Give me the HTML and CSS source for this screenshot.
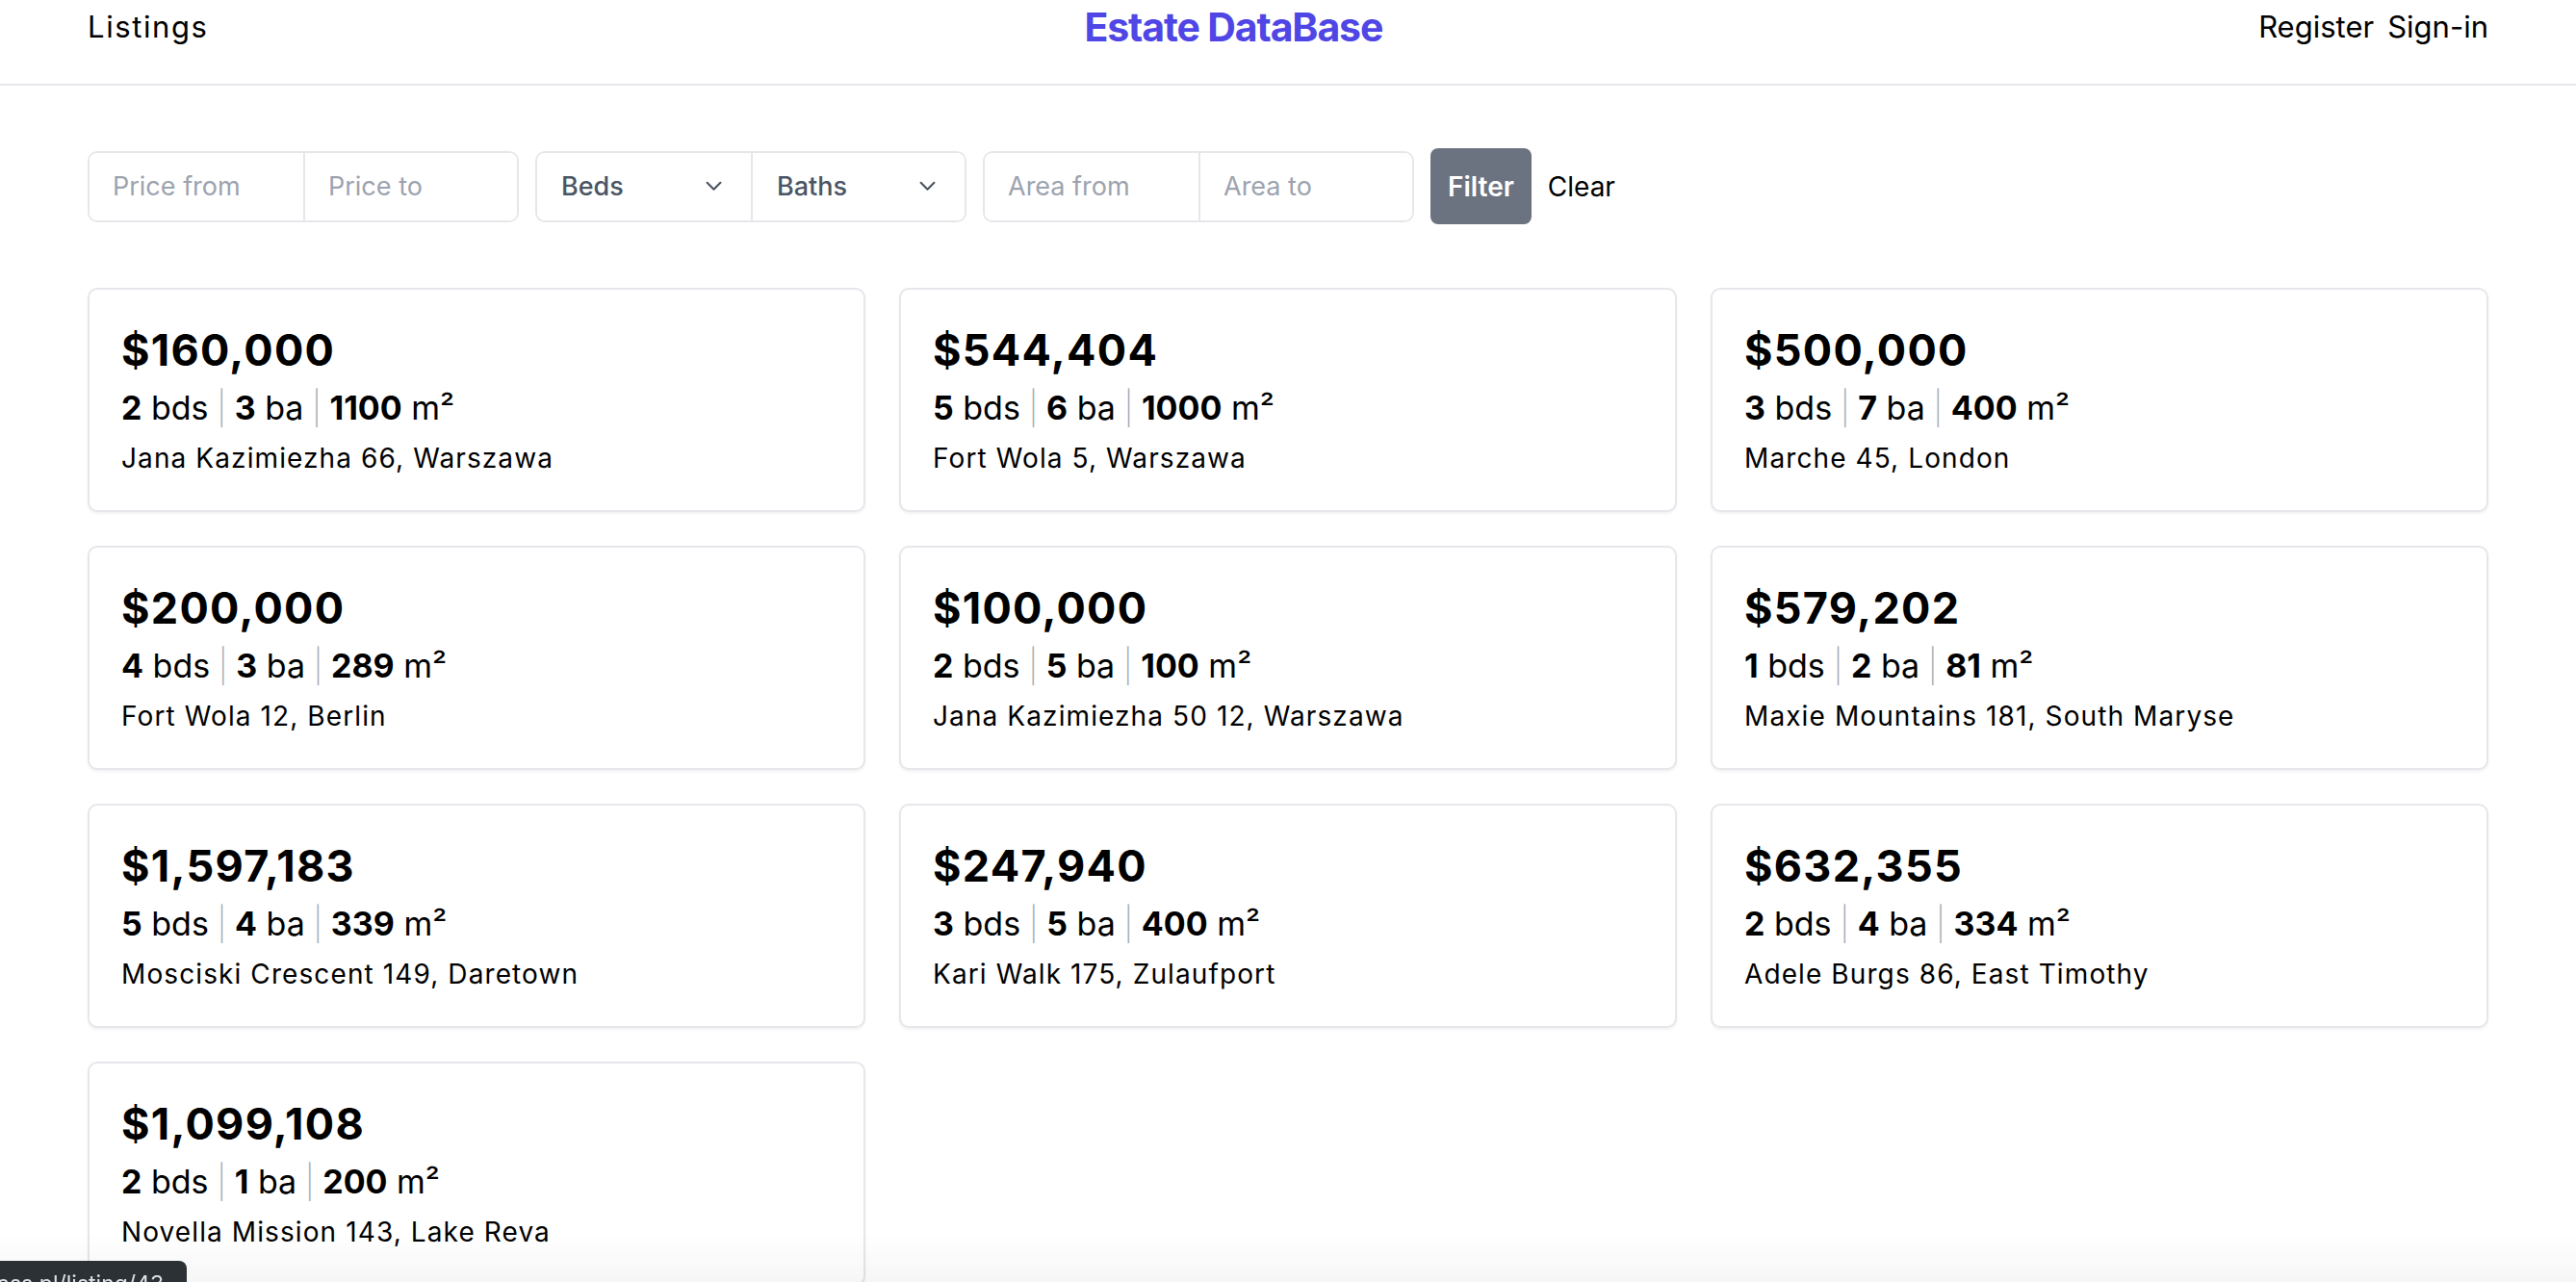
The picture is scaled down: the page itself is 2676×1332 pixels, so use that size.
FILE: index.html
```html
<!DOCTYPE html>
<html lang="en">
<head>
<meta charset="utf-8">
<title>Estate DataBase</title>
<link rel="stylesheet" href="styles.css">
</head>
<body>
<header class="topbar">
  <a class="nav-link nav-home" href="#">Listings</a>
  <a class="brand" href="#">Estate DataBase</a>
  <nav class="auth">
    <a class="nav-link" href="#">Register</a>
    <a class="nav-link" href="#">Sign-in</a>
  </nav>
</header>
<main class="content">
  <form class="filters">
    <div class="group">
      <input class="field" type="text" placeholder="Price from">
      <input class="field" type="text" placeholder="Price to">
    </div>
    <div class="group">
      <div class="field select">Beds<svg class="chev" viewBox="0 0 16 10"><path d="M1.5 1.5 L8 8 L14.5 1.5"/></svg></div>
      <div class="field select">Baths<svg class="chev" viewBox="0 0 16 10"><path d="M1.5 1.5 L8 8 L14.5 1.5"/></svg></div>
    </div>
    <div class="group">
      <input class="field" type="text" placeholder="Area from">
      <input class="field" type="text" placeholder="Area to">
    </div>
    <button class="btn-filter" type="button">Filter</button>
    <button class="btn-clear" type="button">Clear</button>
  </form>

  <section class="grid">
    <article class="card"><div class="price">$160,000</div><div class="specs"><b>2</b> bds <span class="sep">|</span> <b>3</b> ba <span class="sep">|</span> <b>1100</b> m²</div><div class="addr">Jana Kazimiezha 66, Warszawa</div></article>
    <article class="card"><div class="price">$544,404</div><div class="specs"><b>5</b> bds <span class="sep">|</span> <b>6</b> ba <span class="sep">|</span> <b>1000</b> m²</div><div class="addr">Fort Wola 5, Warszawa</div></article>
    <article class="card"><div class="price">$500,000</div><div class="specs"><b>3</b> bds <span class="sep">|</span> <b>7</b> ba <span class="sep">|</span> <b>400</b> m²</div><div class="addr">Marche 45, London</div></article>
    <article class="card"><div class="price">$200,000</div><div class="specs"><b>4</b> bds <span class="sep">|</span> <b>3</b> ba <span class="sep">|</span> <b>289</b> m²</div><div class="addr">Fort Wola 12, Berlin</div></article>
    <article class="card"><div class="price">$100,000</div><div class="specs"><b>2</b> bds <span class="sep">|</span> <b>5</b> ba <span class="sep">|</span> <b>100</b> m²</div><div class="addr">Jana Kazimiezha 50 12, Warszawa</div></article>
    <article class="card"><div class="price">$579,202</div><div class="specs"><b>1</b> bds <span class="sep">|</span> <b>2</b> ba <span class="sep">|</span> <b>81</b> m²</div><div class="addr">Maxie Mountains 181, South Maryse</div></article>
    <article class="card"><div class="price">$1,597,183</div><div class="specs"><b>5</b> bds <span class="sep">|</span> <b>4</b> ba <span class="sep">|</span> <b>339</b> m²</div><div class="addr">Mosciski Crescent 149, Daretown</div></article>
    <article class="card"><div class="price">$247,940</div><div class="specs"><b>3</b> bds <span class="sep">|</span> <b>5</b> ba <span class="sep">|</span> <b>400</b> m²</div><div class="addr">Kari Walk 175, Zulaufport</div></article>
    <article class="card"><div class="price">$632,355</div><div class="specs"><b>2</b> bds <span class="sep">|</span> <b>4</b> ba <span class="sep">|</span> <b>334</b> m²</div><div class="addr">Adele Burgs 86, East Timothy</div></article>
    <article class="card"><div class="price">$1,099,108</div><div class="specs"><b>2</b> bds <span class="sep">|</span> <b>1</b> ba <span class="sep">|</span> <b>200</b> m²</div><div class="addr">Novella Mission 143, Lake Reva</div></article>
  </section>
</main>
<div class="fade"></div>
<div class="status"><span class="status-text">ass.pl/listing/43</span></div>
</body>
</html>
```
FILE: styles.css
```css
* { box-sizing: border-box; }

html, body {
  margin: 0;
  padding: 0;
  background: #ffffff;
  color: #000000;
  font-family: Inter, "Noto Sans", "Liberation Sans", sans-serif;
}

a { color: inherit; text-decoration: none; }

.topbar {
  display: flex;
  justify-content: space-between;
  align-items: center;
  height: 89px;
  padding: 0 91px 31px;
  border-bottom: 2px solid #e5e7eb;
}

.nav-link {
  font-size: 31px;
  line-height: 38px;
}

.nav-home {
  letter-spacing: 1.6px;
}

.brand {
  font-size: 41px;
  line-height: 50px;
  font-weight: 700;
  color: #4f46e5;
  letter-spacing: -1.1px;
}

.auth {
  display: flex;
  gap: 14px;
}

.content {
  padding: 65px 91px 40px;
}

.filters {
  display: flex;
  align-items: center;
  gap: 17px;
  margin: 0 0 66px;
}

.group {
  display: flex;
  height: 74px;
  border: 2px solid #e5e7eb;
  border-radius: 10px;
  overflow: hidden;
}

.field {
  width: 222px;
  height: 100%;
  border: 0;
  margin: 0;
  padding: 0 0 0 24px;
  font-family: inherit;
  font-size: 27px;
  color: #374151;
  background: #fff;
  outline: none;
}

.field + .field {
  border-left: 2px solid #e5e7eb;
}

.field::placeholder { color: #9ca3af; }

.select {
  display: flex;
  align-items: center;
  justify-content: space-between;
  padding: 0 30px 0 25px;
  color: #4b5563;
  font-weight: 500;
}

.chev {
  width: 17px;
  height: 11px;
  fill: none;
  stroke: #4b5563;
  stroke-width: 2;
  stroke-linecap: round;
  stroke-linejoin: round;
}

.btn-filter {
  height: 79px;
  padding: 0 18px;
  border: 0;
  border-radius: 8px;
  background: #6b7280;
  color: #ffffff;
  font-family: inherit;
  font-size: 28px;
  font-weight: 600;
}

.btn-clear {
  border: 0;
  padding: 0;
  background: transparent;
  color: #000;
  font-family: inherit;
  font-size: 28px;
}

.grid {
  display: grid;
  grid-template-columns: repeat(3, 1fr);
  gap: 35px 35px;
}

.card {
  height: 233px;
  padding: 35px 33px;
  border: 2px solid #e5e7eb;
  border-radius: 10px;
  box-shadow: 0 2px 3px rgba(0, 0, 0, 0.05);
  background: #fff;
}

.price {
  font-size: 45px;
  line-height: 56px;
  font-weight: 700;
  letter-spacing: 1.3px;
}

.specs {
  margin-top: 7px;
  font-size: 34px;
  line-height: 49px;
  letter-spacing: 0;
}

.specs b { font-weight: 700; }

.sep {
  color: #a3a9b4;
  font-weight: 200;
  margin: 0 -1px;
}

.addr {
  margin-top: 7px;
  font-size: 28px;
  line-height: 42px;
  letter-spacing: 1.1px;
}

.fade {
  position: fixed;
  left: 0;
  right: 0;
  bottom: 0;
  height: 50px;
  background: linear-gradient(to bottom, rgba(0, 0, 0, 0), rgba(0, 0, 0, 0.035));
  pointer-events: none;
}

.status {
  position: fixed;
  left: 0;
  bottom: 0;
  width: 194px;
  height: 22px;
  overflow: hidden;
  background: #2c3136;
  border-top-right-radius: 8px;
  padding-top: 12px;
  white-space: nowrap;
}

.status-text {
  display: block;
  margin-left: -3px;
  font-size: 23px;
  line-height: 24px;
  color: #dfe3e7;
}
```
